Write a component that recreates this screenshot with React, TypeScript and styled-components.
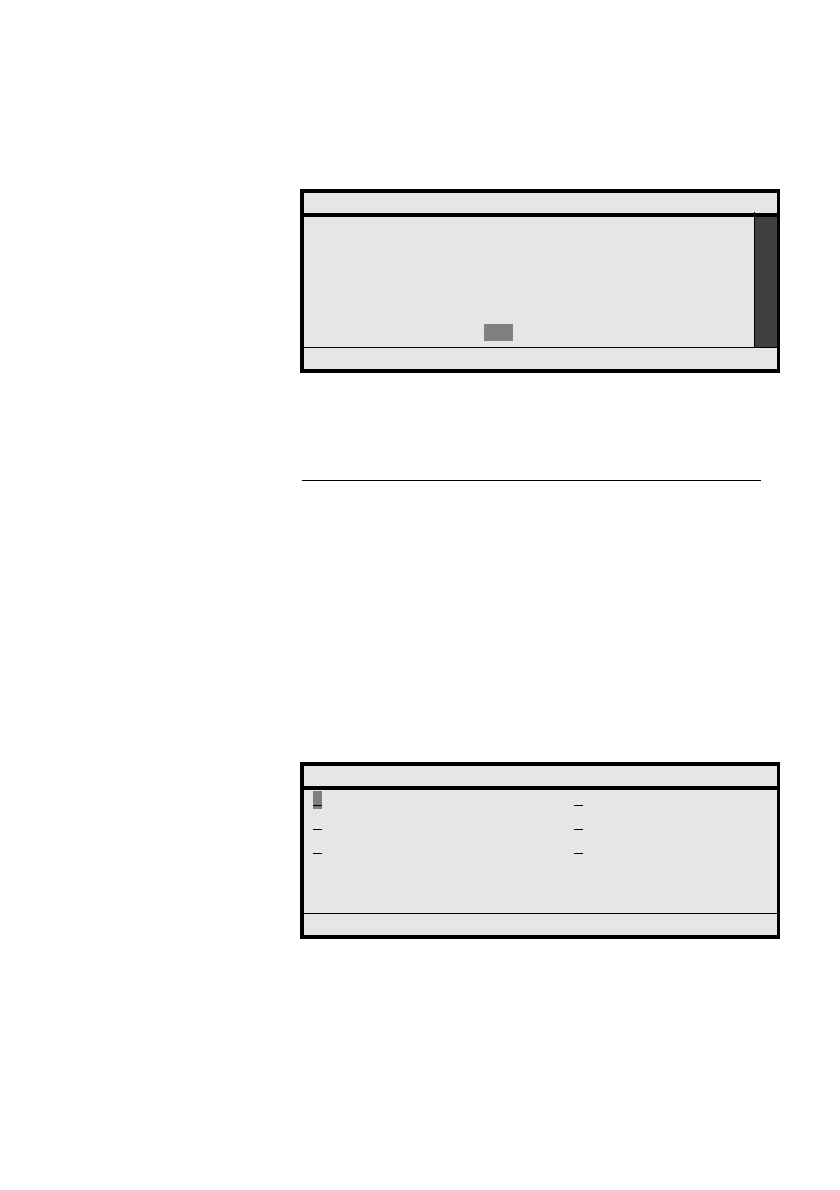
import React from "react";
import styled, { createGlobalStyle } from "styled-components";

const GlobalStyle = createGlobalStyle`
  *, *::before, *::after { box-sizing: border-box; }
  body { margin: 0; background: #fff; font-family: "Liberation Sans", sans-serif; }
`;

const Page = styled.main`
  display: flex;
  flex-direction: column;
  padding: 189px 60px 251px 300px;
`;

const Screen = styled.section`
  display: flex;
  flex-direction: column;
  border: 4px solid #000;
  border-right-width: 3px;
  background: #e6e6e6;
`;

const TitleBar = styled.header`
  height: 24px;
  border-bottom: 4px solid #000;
`;

const StatusBar = styled.footer`
  height: 22px;
  border-top: 1px solid #000;
`;

const ScreenBody = styled.div`
  display: flex;
  height: 130px;
`;

const Content = styled.div`
  flex: 1;
  display: flex;
  align-items: flex-end;
  padding: 0 0 6px 180px;
`;

const Selection = styled.div`
  width: 29px;
  height: 17px;
  background: #808080;
`;

const ScrollTrack = styled.div`
  position: relative;
  width: 23px;
  background: #404040;

  &::before {
    content: "";
    position: absolute;
    top: -5px;
    bottom: 0;
    left: 0;
    width: 1px;
    background: #000;
  }
`;

const Divider = styled.hr`
  width: auto;
  height: 1px;
  margin: 107px 19px 281px 2px;
  border: 0;
  background: #000;
`;

const Options = styled.div`
  display: grid;
  grid-template-columns: 261fr 203fr;
  grid-auto-rows: 24px;
  height: 123px;
  padding: 1px 0 0 9px;
`;

const Key = styled.div<{ $active?: boolean }>`
  width: 9px;
  height: 18px;
  padding-top: 14px;
  background: ${({ $active }) => ($active ? "#808080" : "transparent")};

  &::before {
    content: "";
    display: block;
    height: 1px;
    background: #000;
  }
`;

const keys = [0, 1, 2, 3, 4, 5];

export default function App() {
  return (
    <>
      <GlobalStyle />
      <Page>
        <Screen>
          <TitleBar />
          <ScreenBody>
            <Content>
              <Selection />
            </Content>
            <ScrollTrack />
          </ScreenBody>
          <StatusBar />
        </Screen>
        <Divider />
        <Screen>
          <TitleBar />
          <Options>
            {keys.map((key) => (
              <Key key={key} $active={key === 0} />
            ))}
          </Options>
          <StatusBar />
        </Screen>
      </Page>
    </>
  );
}
